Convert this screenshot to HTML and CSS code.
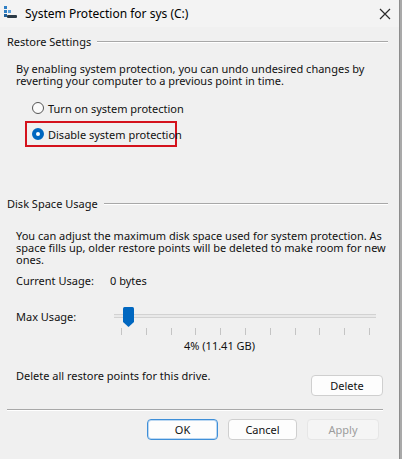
FILE: index.html
```html
<!DOCTYPE html>
<html>
<head>
<meta charset="utf-8">
<link rel="stylesheet" href="styles.css">
</head>
<body>
<div class="window">
  <div class="titlebar">
    <svg class="appicon" width="14" height="13" viewBox="0 0 14 13">
      <rect x="1" y="0" width="3" height="3" fill="#2f7fc4"/>
      <rect x="1" y="4" width="3" height="3" fill="#2f7fc4"/>
      <rect x="5" y="4" width="3" height="3" fill="#5aa0dc"/>
      <rect x="1" y="8" width="3" height="3" fill="#1f5f99"/>
      <rect x="4" y="9" width="10" height="3" rx="1" fill="#2b3a45"/>
    </svg>
    <span class="title">System Protection for sys (C:)</span>
    <svg class="close" width="12" height="12" viewBox="0 0 12 12">
      <path d="M1 1 L11 11 M11 1 L1 11" stroke="#2a2a2a" stroke-width="1.2" fill="none"/>
    </svg>
  </div>
  <div class="content">
    <div class="group-head"><span>Restore Settings</span><div class="etch"></div></div>
    <p class="para p1">By enabling system protection, you can undo undesired changes by reverting your computer to a previous point in time.</p>
    <div class="radio-row r1"><span class="radio"></span><span>Turn on system protection</span></div>
    <div class="highlight"><div class="radio-row"><span class="radio checked"></span><span>Disable system protection</span></div></div>

    <div class="group-head g2"><span>Disk Space Usage</span><div class="etch"></div></div>
    <p class="para p2">You can adjust the maximum disk space used for system protection. As space fills up, older restore points will be deleted to make room for new ones.</p>
    <div class="info-row"><span class="lbl">Current Usage:</span><span>0 bytes</span></div>
    <div class="max-row">
      <span class="lbl max-lbl">Max Usage:</span>
      <div class="slider">
        <div class="track"></div>
        <svg class="thumb" width="11" height="20" viewBox="0 0 11 20">
          <path d="M1.5 0 H9.5 Q11 0 11 1.5 V15 L5.5 20 L0 15 V1.5 Q0 0 1.5 0 Z" fill="#0067c0"/>
        </svg>
        <div class="ticks">
          <i></i><i></i><i></i><i></i><i></i><i></i><i></i><i></i><i></i><i></i><i></i>
        </div>
      </div>
    </div>
    <div class="pct">4% (11.41 GB)</div>
    <div class="delete-row"><span>Delete all restore points for this drive.</span><button class="btn del">Delete</button></div>
    <div class="sep"></div>
    <div class="buttons">
      <button class="btn ok">OK</button>
      <button class="btn cancel">Cancel</button>
      <button class="btn apply">Apply</button>
    </div>
  </div>
</div>
</body>
</html>
```
FILE: styles.css
```css
html, body {
  margin: 0;
  padding: 0;
  background: #a9a9a9;
}
body {
  font-family: "Noto Sans", "Open Sans", sans-serif;
  font-size: 11px;
  color: #111;
  width: 402px;
  height: 459px;
  overflow: hidden;
}
.window {
  width: 399px;
  height: 459px;
  background: #f0f0f0;
  border-right: 1px solid #8c8c8c;
}
.titlebar {
  height: 27px;
  background: #f3f3f3;
  display: flex;
  align-items: center;
  padding-left: 3px;
}
.appicon {
  margin-top: -3px;
}
.title {
  margin-left: 8px;
  font-size: 12px;
  color: #000;
  flex: 1;
}
.close {
  margin-right: 8px;
  margin-top: 1px;
}
.content {
  padding: 0 7px;
}
.group-head {
  display: flex;
  align-items: center;
  height: 14px;
  margin-top: 8px;
  line-height: 14px;
}
.etch {
  flex: 1;
  height: 0;
  border-top: 1px solid #a8a8a8;
  border-bottom: 1px solid #ffffff;
  margin-left: 6px;
  margin-right: 4px;
}
.para {
  margin: 14px 0 0 9px;
  line-height: 12px;
}
.radio-row {
  display: flex;
  align-items: center;
  height: 16px;
  white-space: nowrap;
}
.r1 {
  margin-top: 13px;
  padding-left: 25px;
}
.radio {
  width: 10px;
  height: 10px;
  border: 1px solid #555;
  border-radius: 50%;
  background: #fbfbfb;
  margin-right: 4px;
  box-sizing: content-box;
  flex: none;
}
.radio.checked {
  width: 4px;
  height: 4px;
  border: 4px solid #0067c0;
  background: #fff;
}
.highlight {
  box-sizing: border-box;
  margin: 5px 0 0 18px;
  width: 152px;
  height: 26px;
  border: 2px solid #d4121c;
  display: flex;
  align-items: center;
  padding-left: 5px;
}
.g2 {
  margin-top: 50px;
}
.p2 {
  margin-top: 19px;
}
.info-row {
  display: flex;
  margin: 8px 0 0 9px;
  height: 14px;
  line-height: 14px;
}
.lbl {
  width: 94px;
}
.max-row {
  display: flex;
  align-items: flex-start;
  margin: 15px 0 0 9px;
  height: 34px;
}
.max-lbl {
  margin-top: 7px;
  line-height: 14px;
}
.slider {
  position: relative;
  width: 266px;
  height: 34px;
}
.track {
  position: absolute;
  left: 4px;
  right: 0;
  top: 11px;
  height: 2px;
  background: #e9e9e9;
  border-top: 1px solid #d2d2d2;
  border-bottom: 1px solid #d2d2d2;
}
.thumb {
  position: absolute;
  left: 13px;
  top: 4px;
}
.ticks {
  position: absolute;
  left: 11px;
  right: 6px;
  top: 25px;
  display: flex;
  justify-content: space-between;
}
.ticks i {
  display: block;
  width: 1px;
  height: 7px;
  background: #c4c4c4;
}
.pct {
  margin: 3px 0 0 177px;
  line-height: 12px;
}
.delete-row {
  display: flex;
  align-items: flex-start;
  justify-content: space-between;
  margin: 18px 9px 0 9px;
  line-height: 12px;
}
.btn {
  font-family: "Noto Sans", "Open Sans", sans-serif;
  font-size: 11px;
  color: #111;
  height: 21px;
  padding: 0;
  border: 1px solid #cfcfcf;
  border-radius: 4px;
  background: #fdfdfd;
}
.del {
  width: 72px;
  margin-top: 5px;
}
.sep {
  margin: 13px 9px 0 0;
  border-top: 1px solid #a8a8a8;
  border-bottom: 1px solid #fff;
}
.buttons {
  display: flex;
  margin-top: 8px;
  padding-left: 140px;
  gap: 10px;
}
.ok {
  width: 71px;
  border: 1px solid #3f8fd8;
  box-shadow: inset 0 0 0 1px #bcd8f2;
}
.cancel {
  width: 69px;
}
.apply {
  width: 72px;
  background: #f5f5f5;
  border-color: #e6e6e6;
  color: #9c9c9c;
}
```
